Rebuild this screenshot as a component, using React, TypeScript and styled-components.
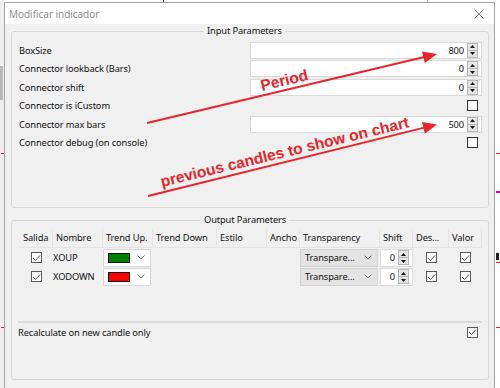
import React from "react";
import styled, { createGlobalStyle } from "styled-components";

const UI_FONT = `"Noto Sans", "Liberation Sans", sans-serif`;
const RED = "#e8252b";
const TEXT_SIZE = "9.3px";
const TEXT_SPACING = "-0.12px";

const GlobalStyle = createGlobalStyle`
  html, body { margin: 0; padding: 0; }
  body { background: #ffffff; font-family: ${UI_FONT}; }
  * { box-sizing: border-box; }
`;

const Desktop = styled.div`
  position: relative;
  width: 500px;
  height: 388px;
  overflow: hidden;
  background: #ffffff;
`;

const ChartMark = styled.div<{ $x: number; $y: number; $w: number; $h: number; $c: string }>`
  position: absolute;
  left: ${(p) => p.$x}px;
  top: ${(p) => p.$y}px;
  width: ${(p) => p.$w}px;
  height: ${(p) => p.$h}px;
  background: ${(p) => p.$c};
`;

const Window = styled.div`
  position: absolute;
  left: 4px;
  top: 2px;
  width: 491px;
  height: 392px;
  border: 1px solid #a3a3a3;
  background: #f0f0f0;
  display: flex;
  flex-direction: column;
`;

const TitleBar = styled.div`
  height: 21px;
  flex: none;
  background: #ffffff;
  display: flex;
  align-items: center;
  justify-content: space-between;
  padding-left: 4px;
  color: #8f8f8f;
  font-size: 10px;
  letter-spacing: -0.05px;
`;

const CloseButton = styled.div`
  width: 30px;
  height: 21px;
  display: flex;
  align-items: center;
  justify-content: center;
`;

const Body = styled.div`
  display: flex;
  flex-direction: column;
  gap: 5px;
  padding: 0 5px 0 6px;
  font-size: ${TEXT_SIZE};
  letter-spacing: ${TEXT_SPACING};
  color: #111;
`;

const GroupBox = styled.fieldset<{ $h: number; $pl: number; $pr: number; $pt: number }>`
  margin: 0;
  min-width: 0;
  height: ${(p) => p.$h}px;
  padding: ${(p) => p.$pt}px ${(p) => p.$pr}px 0 ${(p) => p.$pl}px;
  border: 1px solid #d6d6d6;
  border-radius: 3px;
`;

const Legend = styled.legend<{ $offset: number }>`
  margin-left: ${(p) => p.$offset}px;
  padding: 0 3px;
  line-height: 14px;
`;

const ParamGrid = styled.div`
  display: grid;
  grid-template-columns: 231px 232px;
  grid-auto-rows: 18.5px;
  align-items: center;
`;

const ParamLabel = styled.div`
  white-space: nowrap;
`;

const Field = styled.div<{ $w: number }>`
  width: ${(p) => p.$w}px;
  height: 17px;
  display: flex;
  align-items: center;
  background: #ffffff;
  border: 1px solid #dadada;
`;

const FieldValue = styled.div`
  flex: 1;
  text-align: right;
  padding-right: 3px;
`;

const Spinner = styled.div`
  width: 11px;
  height: 15px;
  margin-right: 3px;
  display: flex;
  flex-direction: column;
`;

const SpinButton = styled.div<{ $down?: boolean }>`
  flex: 1;
  display: flex;
  align-items: center;
  justify-content: center;
  background: #e6e6e6;
  border: 1px solid #b5b5b5;
  ${(p) => (p.$down ? "border-top: none;" : "")}
`;

const CheckCell = styled.div<{ $end?: boolean }>`
  display: flex;
  justify-content: ${(p) => (p.$end ? "flex-end" : "center")};
  padding-right: ${(p) => (p.$end ? 4 : 0)}px;
  align-items: center;
`;

const Box = styled.span<{ $checked?: boolean }>`
  width: 11px;
  height: 11px;
  display: inline-flex;
  align-items: center;
  justify-content: center;
  background: #ffffff;
  border: 1px solid ${(p) => (p.$checked ? "#5a5a5a" : "#333333")};
`;

const COLS = "33px 50px 50px 64px 50px 33px 80px 33px 36px 33px";

const ListPane = styled.div`
  height: 92px;
`;

const ListHeader = styled.div`
  display: grid;
  grid-template-columns: ${COLS};
  height: 19px;
  border-bottom: 1px solid #e3e3e3;
`;

const HeaderCell = styled.div`
  padding-left: 3px;
  border-right: 1px solid #e3e3e3;
  line-height: 18px;
  white-space: nowrap;
  overflow: hidden;
`;

const ListRow = styled.div`
  display: grid;
  grid-template-columns: ${COLS};
  height: 19px;
  align-items: center;
`;

const Cell = styled.div`
  display: flex;
  align-items: center;
  white-space: nowrap;
`;

const Combo = styled.div<{ $w: number; $gray?: boolean }>`
  width: ${(p) => p.$w}px;
  height: 18px;
  display: flex;
  align-items: center;
  justify-content: space-between;
  padding: 0 5px 0 4px;
  background: ${(p) => (p.$gray ? "#e3e3e3" : "#ffffff")};
  border: 1px solid ${(p) => (p.$gray ? "#d2d2d2" : "#d6d6d6")};
`;

const Swatch = styled.span<{ $c: string }>`
  width: 22px;
  height: 10px;
  background: ${(p) => p.$c};
  border: 1px solid #111;
`;

const ShiftBox = styled(Field)`
  height: 18px;
`;

const RecalcPanel = styled.div`
  margin-left: -2px;
  border-top: 2px solid #dadada;
  height: 20px;
  display: flex;
  align-items: center;
  justify-content: space-between;
  padding: 0 4px 0 0;
`;

const Overlay = styled.svg`
  position: absolute;
  left: 0;
  top: 0;
  pointer-events: none;
`;

const Chevron = () => (
  <svg width="8" height="5" viewBox="0 0 8 5">
    <polyline points="0.5,0.5 4,4 7.5,0.5" fill="none" stroke="#7a7a7a" strokeWidth="1" />
  </svg>
);

const Tri = ({ down }: { down?: boolean }) => (
  <svg width="5" height="3" viewBox="0 0 5 3">
    <polygon points={down ? "0,0 5,0 2.5,3" : "0,3 5,3 2.5,0"} fill="#111" />
  </svg>
);

const SpinBox = () => (
  <Spinner>
    <SpinButton>
      <Tri />
    </SpinButton>
    <SpinButton $down>
      <Tri down />
    </SpinButton>
  </Spinner>
);

const CheckBox = ({ checked }: { checked?: boolean }) => (
  <Box $checked={checked}>
    {checked && (
      <svg width="9" height="8" viewBox="0 0 9 8">
        <polyline points="1,4 3.5,6.5 8,1.5" fill="none" stroke="#555" strokeWidth="1" />
      </svg>
    )}
  </Box>
);

type Param = { label: string; value?: string; check?: boolean };
const params: Param[] = [
  { label: "BoxSize", value: "800" },
  { label: "Connector lookback (Bars)", value: "0" },
  { label: "Connector shift", value: "0" },
  { label: "Connector is iCustom", check: false },
  { label: "Connector max bars", value: "500" },
  { label: "Connector debug (on console)", check: false },
];

const headers = ["Salida", "Nombre", "Trend Up.", "Trend Down", "Estilo", "Ancho", "Transparency", "Shift", "Des...", "Valor"];

const outputs = [
  { name: "XOUP", color: "#008000" },
  { name: "XODOWN", color: "#ff0000" },
];

function Arrow({ x1, y1, x2, y2 }: { x1: number; y1: number; x2: number; y2: number }) {
  const dx = x2 - x1;
  const dy = y2 - y1;
  const len = Math.hypot(dx, dy);
  const ux = dx / len;
  const uy = dy / len;
  const hl = 14;
  const hw = 6;
  const bx = x2 - ux * hl;
  const by = y2 - uy * hl;
  const px = -uy;
  const py = ux;
  const pts = `${x2},${y2} ${bx + px * hw},${by + py * hw} ${bx - px * hw},${by - py * hw}`;
  return (
    <g>
      <line x1={x1} y1={y1} x2={bx + ux * 2} y2={by + uy * 2} stroke={RED} strokeWidth="2" />
      <polygon points={pts} fill={RED} />
    </g>
  );
}

export default function App() {
  return (
    <>
      <GlobalStyle />
      <Desktop>
        <ChartMark $x={0} $y={0} $w={4} $h={388} $c="#efefef" />
        <ChartMark $x={0} $y={66} $w={3} $h={34} $c="#b9b9b9" />
        <ChartMark $x={1} $y={153} $w={3} $h={1} $c="#e02020" />
        <ChartMark $x={1} $y={327} $w={3} $h={1} $c="#e02020" />
        <ChartMark $x={163} $y={0} $w={1} $h={2} $c="#333" />
        <ChartMark $x={427} $y={0} $w={1} $h={2} $c="#f0a0a0" />
        <ChartMark $x={496} $y={191} $w={4} $h={2} $c="#d000d0" />
        <ChartMark $x={496} $y={153} $w={4} $h={1} $c="#e02020" />
        <ChartMark $x={496} $y={253} $w={3} $h={7} $c="#222" />
        <ChartMark $x={496} $y={262} $w={4} $h={1} $c="#e02020" />
        <ChartMark $x={496} $y={327} $w={4} $h={1} $c="#e02020" />
        <Window>
          <TitleBar>
            <span>Modificar indicador</span>
            <CloseButton>
              <svg width="10" height="10" viewBox="0 0 10 10">
                <path d="M0.5 0.5 L9.5 9.5 M9.5 0.5 L0.5 9.5" stroke="#8a8a8a" strokeWidth="1" />
              </svg>
            </CloseButton>
          </TitleBar>
          <Body>
            <GroupBox $h={184} $pl={7} $pr={6} $pt={3}>
              <Legend $offset={185}>Input Parameters</Legend>
              <ParamGrid>
                {params.map((p) => (
                  <React.Fragment key={p.label}>
                    <ParamLabel>{p.label}</ParamLabel>
                    {p.value !== undefined ? (
                      <Field $w={232}>
                        <FieldValue>{p.value}</FieldValue>
                        <SpinBox />
                      </Field>
                    ) : (
                      <CheckCell $end>
                        <CheckBox checked={p.check} />
                      </CheckCell>
                    )}
                  </React.Fragment>
                ))}
              </ParamGrid>
            </GroupBox>
            <GroupBox $h={167} $pl={8} $pr={6} $pt={2}>
              <Legend $offset={181}>Output Parameters</Legend>
              <ListPane>
                <ListHeader>
                  {headers.map((h) => (
                    <HeaderCell key={h}>{h}</HeaderCell>
                  ))}
                </ListHeader>
                {outputs.map((o) => (
                  <ListRow key={o.name}>
                    <CheckCell>
                      <CheckBox checked />
                    </CheckCell>
                    <Cell>{o.name}</Cell>
                    <Cell>
                      <Combo $w={48}>
                        <Swatch $c={o.color} />
                        <Chevron />
                      </Combo>
                    </Cell>
                    <Cell />
                    <Cell />
                    <Cell />
                    <Cell>
                      <Combo $w={78} $gray>
                        <span>Transpare...</span>
                        <Chevron />
                      </Combo>
                    </Cell>
                    <Cell>
                      <ShiftBox $w={33}>
                        <FieldValue>0</FieldValue>
                        <SpinBox />
                      </ShiftBox>
                    </Cell>
                    <CheckCell>
                      <CheckBox checked />
                    </CheckCell>
                    <CheckCell>
                      <CheckBox checked />
                    </CheckCell>
                  </ListRow>
                ))}
              </ListPane>
              <RecalcPanel>
                <span>Recalculate on new candle only</span>
                <CheckBox checked />
              </RecalcPanel>
            </GroupBox>
          </Body>
        </Window>
        <Overlay width="500" height="388" viewBox="0 0 500 388">
          <Arrow x1={147} y1={123} x2={437} y2={54} />
          <Arrow x1={148} y1={196} x2={437} y2={124.5} />
          <text
            x="262"
            y="91"
            transform="rotate(-13.5 262 91)"
            fill={RED}
            fontFamily='"Liberation Sans", Arial, sans-serif'
            fontWeight="bold"
            fontSize="15.5"
          >
            Period
          </text>
          <text
            x="162"
            y="187"
            transform="rotate(-13.6 162 187)"
            fill={RED}
            fontFamily='"Liberation Sans", Arial, sans-serif'
            fontWeight="bold"
            fontSize="15.5"
          >
            previous candles to show on chart
          </text>
        </Overlay>
      </Desktop>
    </>
  );
}
